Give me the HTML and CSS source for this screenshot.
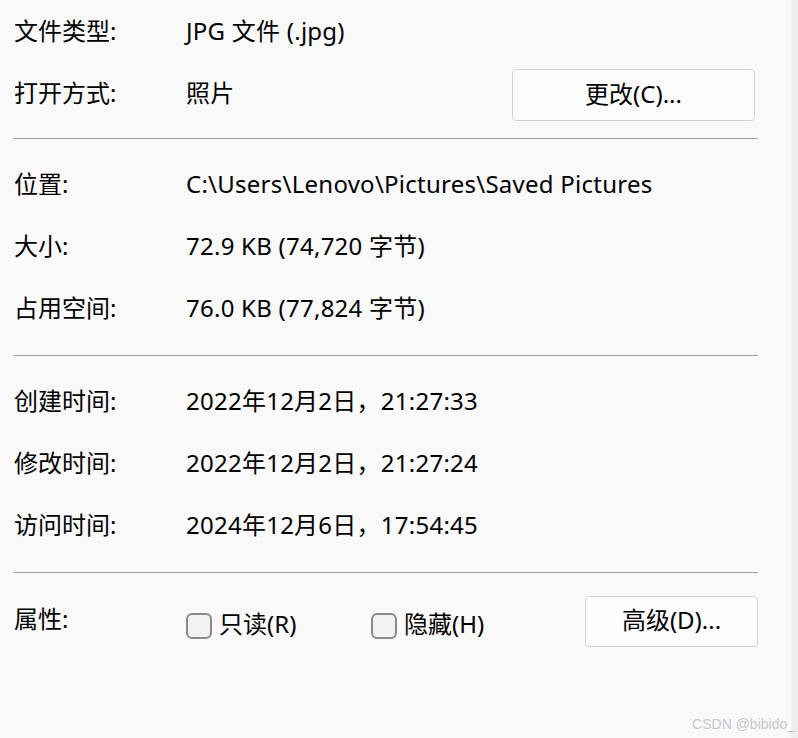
FILE: index.html
```html
<!DOCTYPE html>
<html lang="zh-CN">
<head>
<meta charset="utf-8">
<link rel="stylesheet" href="styles.css">
</head>
<body>
<div class="window">
  <main class="panel">
    <div class="row"><div class="label">文件类型:</div><div class="value">JPG 文件 (.jpg)</div></div>
    <div class="row"><div class="label">打开方式:</div><div class="value grow">照片</div><button class="btn btn-change">更改(C)...</button></div>
    <div class="sep sep-first"></div>
    <div class="row"><div class="label">位置:</div><div class="value">C:\Users\Lenovo\Pictures\Saved Pictures</div></div>
    <div class="row"><div class="label">大小:</div><div class="value">72.9 KB (74,720 字节)</div></div>
    <div class="row"><div class="label">占用空间:</div><div class="value">76.0 KB (77,824 字节)</div></div>
    <div class="sep"></div>
    <div class="row"><div class="label">创建时间:</div><div class="value">2022年12月2日，21:27:33</div></div>
    <div class="row"><div class="label">修改时间:</div><div class="value">2022年12月2日，21:27:24</div></div>
    <div class="row"><div class="label">访问时间:</div><div class="value">2024年12月6日，17:54:45</div></div>
    <div class="sep sep-last"></div>
    <div class="row row-attr">
      <div class="label label-attr">属性:</div>
      <label class="check check-ro"><span class="box"></span>只读(R)</label>
      <label class="check check-hide"><span class="box"></span>隐藏(H)</label>
      <button class="btn btn-adv">高级(D)...</button>
    </div>
    <div class="watermark">CSDN @bibido_</div>
  </main>
  <div class="edge"></div>
</div>
</body>
</html>
```

FILE: styles.css
```css
* { box-sizing: border-box; }
html, body {
  margin: 0;
  padding: 0;
  background: #f9f9f9;
  height: 100%;
}
body {
  font-family: "Noto Sans", "Noto Sans CJK SC", sans-serif;
  font-size: 24px;
  color: #000;
}
.window {
  display: flex;
  height: 738px;
}
.panel {
  flex: 1;
  padding: 1px 33px 0 14px;
  position: relative;
}
.edge {
  width: 9px;
  background: #ededed;
  border-left: 1px solid #f4f4f4;
}
.row {
  display: flex;
  align-items: center;
  height: 62px;
}
.label {
  width: 172px;
  flex: none;
  line-height: 30px;
  margin-top: -3px;
}
.value {
  line-height: 30px;
  white-space: nowrap;
  margin-top: -3px;
  letter-spacing: 0.25px;
}
.grow { flex: 1; }
.sep {
  height: 1px;
  background: #a0a0a0;
  margin: 15px 0;
}
.sep-first { margin-top: 13px; }
.sep-last { margin-bottom: 18px; }
.btn {
  font-family: inherit;
  font-size: 24px;
  color: #000;
  background: #fdfdfd;
  border: 1px solid #d3d3d3;
  border-radius: 4px;
  height: 52px;
  padding: 0 0 3px;
  line-height: 30px;
}
.btn-change {
  width: 243px;
  margin-right: 3px;
  margin-top: 2px;
}
.row-attr { align-items: center; }
.label-attr { margin-top: -6px; }
.check {
  display: flex;
  align-items: center;
  line-height: 30px;
  margin-top: 4px;
}
.check-ro { width: 185px; }
.check-hide { width: 214px; }
.box {
  width: 26px;
  height: 26px;
  border: 2px solid #8a8a8a;
  border-radius: 6px;
  background: #f2f2f2;
  margin-right: 7px;
  margin-top: 4px;
}
.btn-adv {
  width: 173px;
  height: 51px;
  margin-top: -2px;
}
.watermark {
  position: absolute;
  right: -4px;
  bottom: 6px;
  font-family: "Liberation Sans", sans-serif;
  font-size: 14px;
  color: #c8c8c8;
}
```
